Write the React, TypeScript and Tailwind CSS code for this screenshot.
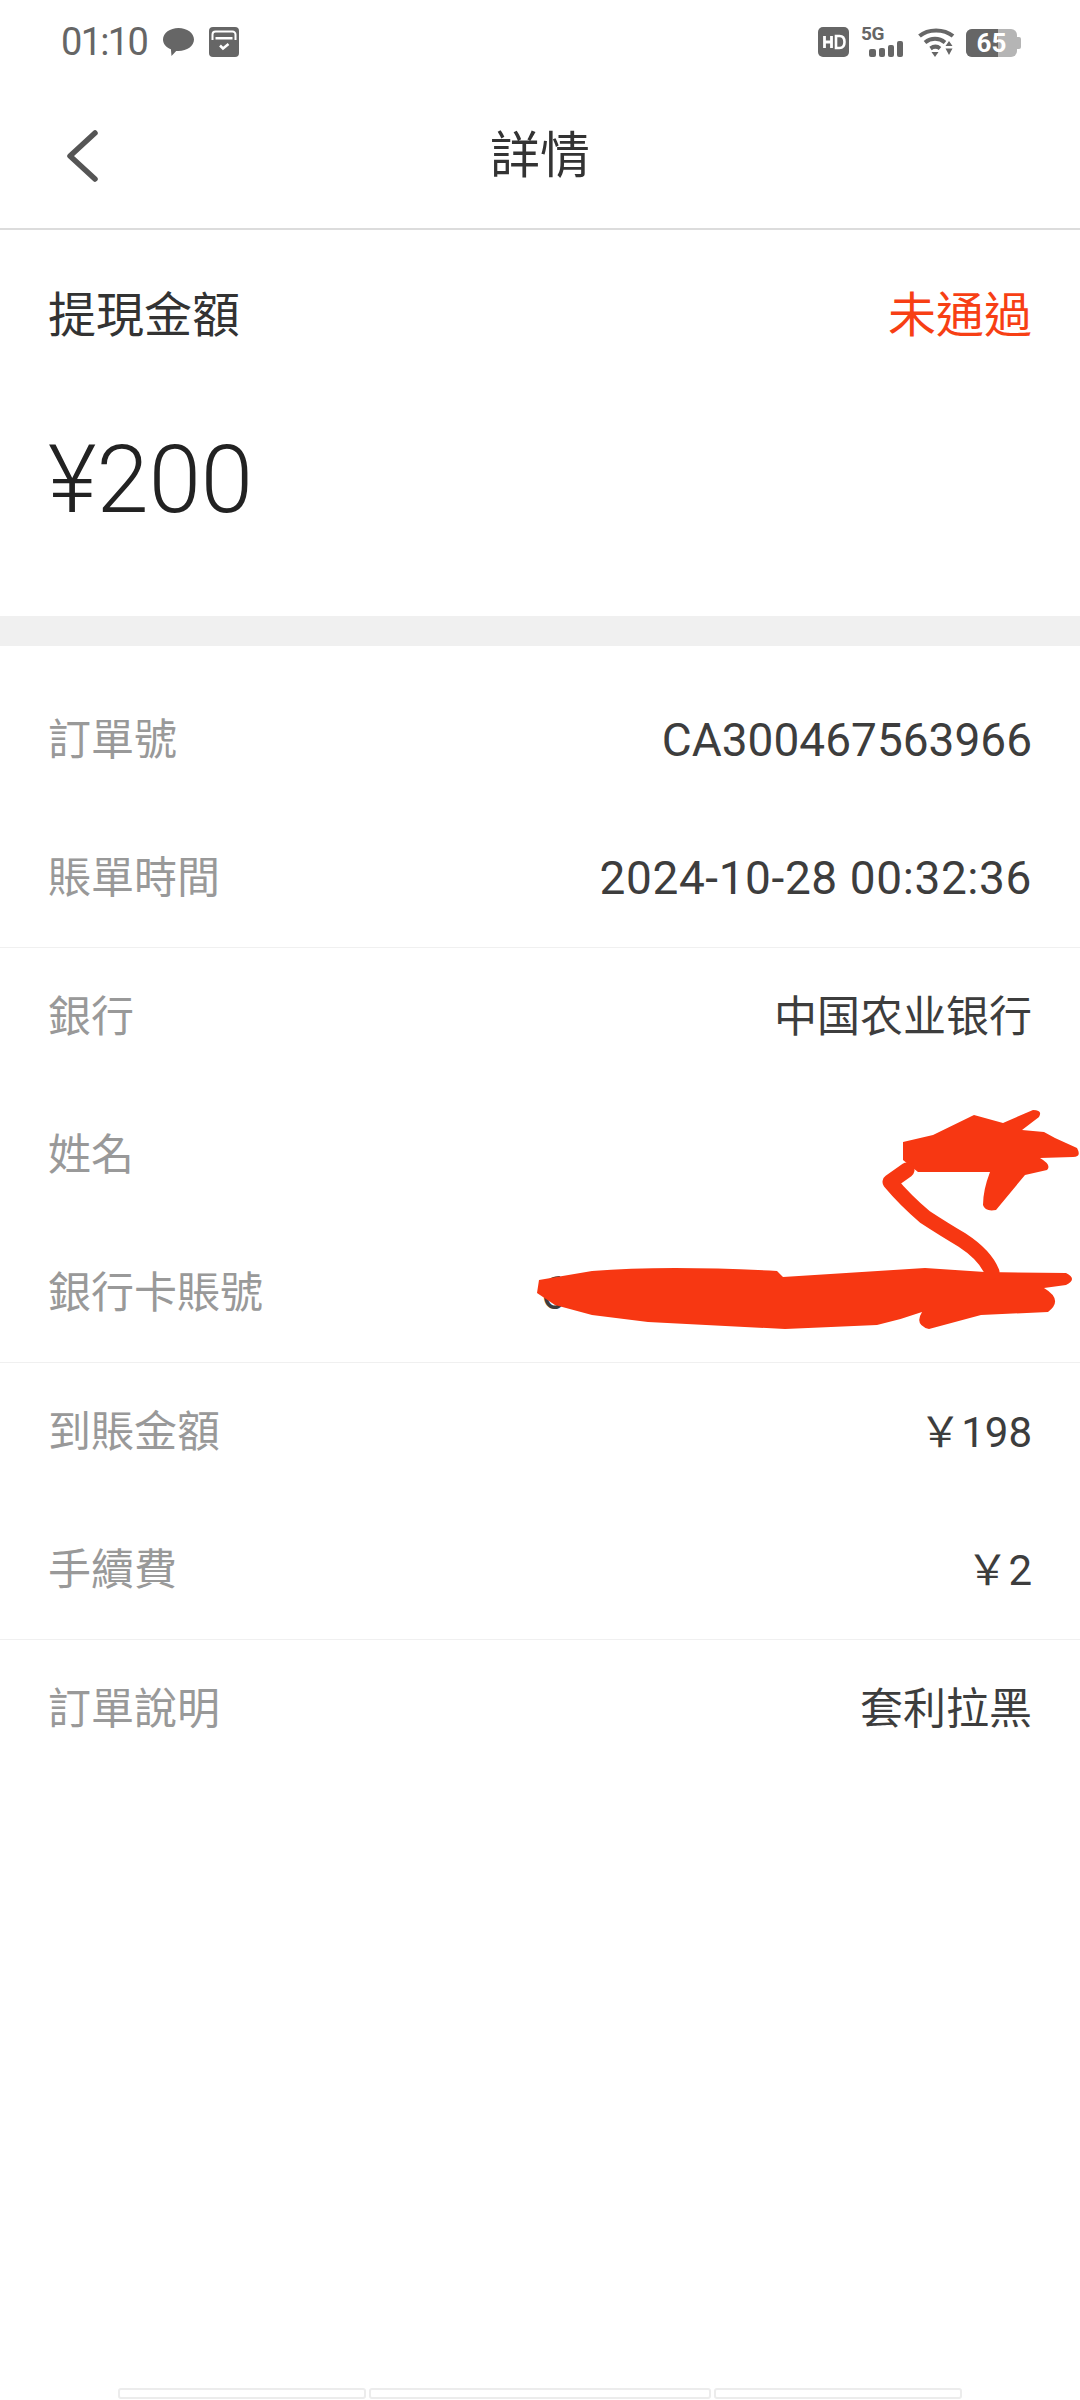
const FONT = "font-['Roboto','Noto_Sans_CJK_TC',sans-serif]";

function Row({ label, value, valueClass = "text-[43px]" }: { label: string; value: React.ReactNode; valueClass?: string }) {
  return (
    <div className="flex h-[138px] items-center justify-between">
      <span className="text-[43px] text-[#999999]">{label}</span>
      <span className={`${valueClass} text-[#3d3d3d]`}>{value}</span>
    </div>
  );
}

function StatusBar() {
  return (
    <div className="flex h-[78px] shrink-0 items-start justify-between pl-[61px] pr-[59px] pt-[27px] text-[#666666]">
      <div className="flex h-[30px] items-center">
        <span className="text-[38px] leading-[30px] tracking-[-1.7px]">01:10</span>
        <svg className="ml-[16px]" width="31" height="30" viewBox="0 0 31 30">
          <path d="M15.500 1C24 1 31 6 31 12.500S24 24 15.500 24c-.800 0-1.500 0-2.300-.1L8.500 29l-.6-6.700C3 20.300 0 16.800 0 12.500 0 6 7 1 15.500 1z" fill="#666666" />
        </svg>
        <svg className="ml-[15px]" width="30" height="30" viewBox="0 0 30 30">
          <rect width="30" height="30" rx="4" fill="#666666" />
          <path d="M3.500 13V7.500a3 3 0 0 1 3-3h17a3 3 0 0 1 3 3V13" fill="none" stroke="#fff" strokeWidth="2" />
          <rect x="6.500" y="10" width="17" height="2.500" fill="#fff" />
          <path d="M11 18.500l3 3 5.500-4.500" fill="none" stroke="#fff" strokeWidth="2.500" />
        </svg>
      </div>
      <div className="flex h-[30px] items-end">
        <svg width="31" height="30" viewBox="0 0 31 30">
          <rect width="31" height="30" rx="5" fill="#666666" />
          <path d="M6.500 9v12M13.500 9v12M6.500 15h7" stroke="#fff" strokeWidth="2.800" fill="none" />
          <path d="M18 9v12h3.500c3.500 0 5-2.500 5-6s-1.500-6-5-6z" stroke="#fff" strokeWidth="2.600" fill="none" />
        </svg>
        <div className="relative ml-[12px] h-[30px] w-[44px]">
          <span className="absolute left-0 top-[-1px] text-[19px] font-bold leading-[16px] tracking-[-0.5px]">5G</span>
          <div className="absolute bottom-0 left-[8px] flex items-end gap-[3px]">
            <div className="h-[8px] w-[7px] rounded-[2px] bg-[#666666]" />
            <div className="h-[9px] w-[6px] rounded-[2px] bg-[#666666]" />
            <div className="h-[12px] w-[6px] rounded-[2px] bg-[#666666]" />
            <div className="h-[16px] w-[6px] rounded-[2px] bg-[#666666]" />
          </div>
        </div>
        <svg className="ml-[13px]" width="37" height="30" viewBox="0 0 37 30">
          <path d="M1.500 9C10 1.500 26 1.500 35 9" fill="none" stroke="#666666" strokeWidth="4" />
          <path d="M7 15.500c6-5 14-5 20 0" fill="none" stroke="#666666" strokeWidth="4" />
          <path d="M12.500 21.500c3.500-2.500 6.500-2.500 9.500 0" fill="none" stroke="#666666" strokeWidth="4" />
          <path d="M13.500 25h7l-3.500 5z" fill="#666666" />
          <path d="M31 14l3.500 5h-7zM27.500 21.500h7L31 28z" fill="#666666" />
        </svg>
        <div className="ml-[11px] flex h-[28px] items-center">
          <div className="relative flex h-[28px] w-[51px] items-center justify-center rounded-[6px] bg-[#b5b5b5]">
            <div className="absolute inset-y-0 left-0 w-[32px] rounded-l-[6px] bg-[#666666]" />
            <span className="relative text-[26px] font-bold leading-[28px] text-white">65</span>
          </div>
          <div className="h-[12px] w-[4px] rounded-r-[2px] bg-[#b5b5b5]" />
        </div>
      </div>
    </div>
  );
}

function Scribble() {
  return (
    <svg className="absolute left-0 top-0" width="1080" height="1340" viewBox="0 0 1080 1340">
      <path
        fill="#f73712"
        d="M539 1280L592 1271Q666 1265 777 1271L783 1277L925 1268L985 1272L1066 1273Q1078 1279 1066 1285L1044 1288Q1064 1300 1048 1312L981 1315L929 1329Q914 1325 922 1312Q900 1320 877 1325L785 1329L648 1322L592 1315L555 1305L537 1293Z"
      />
      <path
        fill="#f73712"
        d="M903 1142L933 1135L974 1115L1003 1123L1033 1110Q1043 1110 1039 1117L1022 1130L1044 1132L1055 1138L1077 1148Q1082 1157 1073 1157L1040 1158Q1052 1165 1047 1170L1025 1175L996 1210Q985 1212 983 1205Q983 1190 990 1172L918 1172L903 1160Z"
      />
      <path
        fill="none"
        stroke="#f73712"
        strokeWidth="15"
        strokeLinecap="round"
        strokeLinejoin="round"
        d="M907 1170L890 1182Q905 1200 925 1217Q945 1230 962 1240Q985 1255 992 1272"
      />
    </svg>
  );
}

export default function App() {
  return (
    <div className={`${FONT} relative flex h-[2400px] w-[1080px] flex-col overflow-hidden bg-white`}>
      <StatusBar />
      <header className="relative flex h-[152px] shrink-0 items-center justify-center border-b-2 border-[#dcdcdc] pt-[6px]">
        <svg className="absolute left-[64px] top-[48px]" width="38" height="62" viewBox="0 0 38 62">
          <path d="M31 7L6 30l25 23" fill="none" stroke="#555555" strokeWidth="5.500" strokeLinecap="round" strokeLinejoin="round" />
        </svg>
        <h1 className="text-[50px] font-normal text-[#333333]">詳情</h1>
      </header>

      <section className="flex h-[416px] shrink-0 flex-col border-b-[30px] border-[#f0f0f0] px-[48px]">
        <div className="flex items-center justify-between pt-[56px]">
          <span className="text-[48px] leading-[60px] text-[#333333]">提現金額</span>
          <span className="text-[48px] leading-[60px] text-[#f73f14]">未通過</span>
        </div>
        <div className="mt-[81px] text-[94px] font-light leading-[106px] text-[#222222]">¥200</div>
      </section>

      <section className="border-b border-[#f0f0f0] px-[48px] pt-[25px]">
        <Row label="訂單號" value="CA300467563966" valueClass="text-[46px]" />
        <Row label="賬單時間" value="2024-10-28 00:32:36" valueClass="text-[46px] tracking-[0.6px]" />
      </section>
      <section className="border-b border-[#f0f0f0] px-[48px]">
        <Row label="銀行" value="中国农业银行" />
        <Row label="姓名" value="" />
        <Row label="銀行卡賬號" value={<span className="block w-[491px]">6</span>} valueClass="text-[46px]" />
      </section>
      <section className="border-b border-[#f0f0f0] px-[48px]">
        <Row label="到賬金額" value="￥198" valueClass="text-[42px]" />
        <Row label="手續費" value="￥2" valueClass="text-[42px]" />
      </section>
      <section className="px-[48px]">
        <Row label="訂單說明" value="套利拉黑" />
      </section>

      <Scribble />

      <div className="mt-auto flex justify-center gap-[3px] pb-[1px]">
        <div className="h-[11px] w-[248px] rounded-[3px] border-2 border-[#ececec]" />
        <div className="h-[11px] w-[342px] rounded-[3px] border-2 border-[#ececec]" />
        <div className="h-[11px] w-[248px] rounded-[3px] border-2 border-[#ececec]" />
      </div>
    </div>
  );
}
